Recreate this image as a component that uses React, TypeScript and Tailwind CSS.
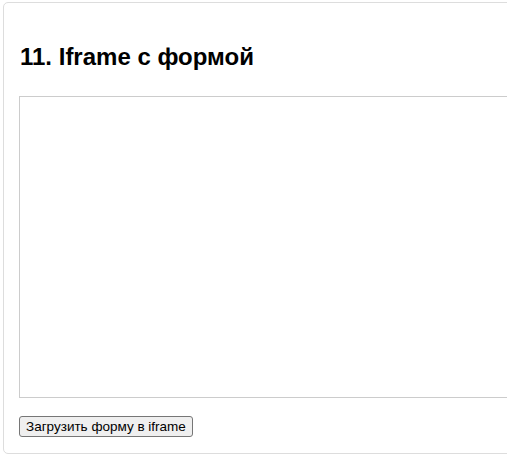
export default function App() {
  return (
    <div className="w-[507px] h-[457px] overflow-hidden bg-white pt-[2px] pl-[3px]" style={{ fontFamily: '"Liberation Sans", Arial, sans-serif' }}>
      <div className="w-[640px] border border-[#dddddd] rounded-[5px] bg-white px-[15px] pt-[15px] pb-[16px]">
        <h2 className="mt-[25px] mb-[25px] text-[24px] leading-[28px] font-bold text-black pl-[1px]">11. Iframe с формой</h2>
        <div className="h-[302px] w-full border border-[#cccccc] bg-white" />
        <button className="mt-[18px] block h-[21px] px-[6px] border border-[#767676] rounded-[3px] bg-[#efefef] text-[13.5px] leading-[16px] text-black">
          Загрузить форму в iframe
        </button>
      </div>
    </div>
  );
}
